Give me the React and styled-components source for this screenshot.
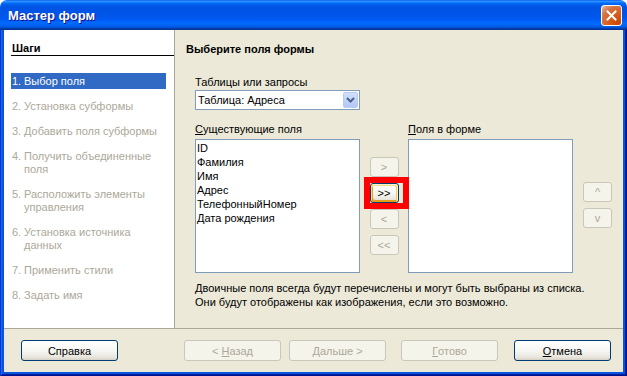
import React from 'react'
import styled, { createGlobalStyle, css } from 'styled-components'

const GlobalStyle = createGlobalStyle`
  html, body {
    margin: 0;
    padding: 0;
    background: #fff;
  }
  body {
    font-family: "Liberation Sans", Arial, sans-serif;
    font-size: 11px;
    color: #000;
  }
`

const Window = styled.div`
  width: 627px;
  height: 376px;
  display: flex;
  flex-direction: column;
  overflow: hidden;
`

const TitleBar = styled.div`
  height: 30px;
  flex: none;
  box-sizing: border-box;
  display: flex;
  align-items: center;
  justify-content: space-between;
  padding: 0 5px 0 8px;
  border-radius: 7px 7px 0 0;
  background: linear-gradient(180deg, #0058ee 0%, #3593ff 4%, #288eff 6%, #127dff 8%, #036ffc 10%, #0262ee 14%, #0057e5 20%, #0054e3 24%, #0055eb 56%, #005bf5 66%, #026afe 76%, #0062ef 86%, #0052d6 92%, #0040ab 94%, #003092 100%);
`

const Title = styled.span`
  color: #fff;
  font: bold 13px "Liberation Sans", Arial, sans-serif;
  text-shadow: 1px 1px #0f1089;
  margin-top: 1px;
`

const CloseButton = styled.div`
  width: 21px;
  height: 21px;
  box-sizing: border-box;
  border: 1px solid #fff;
  border-radius: 3px;
  background: radial-gradient(circle at 90% 90%, #cc4600 0%, #dc6527 55%, #cd7546 70%, #e5a07e 90%, #f6c6ac 100%);
  display: flex;
  align-items: center;
  justify-content: center;
`

const Frame = styled.div`
  flex: 1;
  min-height: 0;
  display: flex;
  flex-direction: column;
  padding: 0 4px 4px;
  background: #0855dd;
  box-shadow: inset 1px 0 #0831d9, inset -1px 0 #00138c, inset 0 -1px #00138c, inset 2px 0 #166aee, inset -2px 0 #001ea0, inset 0 -2px #001ea0;
`

const Main = styled.div`
  height: 298px;
  flex: none;
  display: flex;
`

const Sidebar = styled.div`
  width: 171px;
  flex: none;
  box-sizing: border-box;
  background: #fff;
  border-right: 1px solid #aca899;
`

const StepsHeader = styled.div`
  margin: 12px 0 0 7px;
  padding-left: 1px;
  line-height: 13px;
  font-weight: bold;
  border-bottom: 1px solid #000;
`

const StepList = styled.div`
  margin-top: 17px;
  padding: 0 8px 0 7px;
`

const Step = styled.div`
  display: flex;
  white-space: nowrap;
  line-height: 13px;
  padding: 2px 0 1px 1px;
  margin-bottom: 9px;
  color: ${p => (p.$active ? '#fff' : '#aca899')};
  background: ${p => (p.$active ? '#316ac5' : 'transparent')};
`

const StepNum = styled.span`
  width: 12px;
  flex: none;
`

const Content = styled.div`
  flex: 1;
  background: #ece9d8;
  padding: 13px 0 0 11px;
`

const Heading = styled.div`
  font-weight: bold;
  line-height: 13px;
`

const Form = styled.div`
  margin: 20px 0 0 9px;
`

const Label = styled.div`
  line-height: 13px;
`

const Combo = styled.div`
  width: 165px;
  height: 20px;
  margin-top: 1px;
  box-sizing: border-box;
  border: 1px solid #7f9db9;
  background: #fff;
  display: flex;
  align-items: center;
  justify-content: space-between;
  padding: 0 1px 0 2px;
`

const ComboArrow = styled.div`
  width: 15px;
  height: 16px;
  box-sizing: border-box;
  border: 1px solid #b9cbf3;
  border-radius: 2px;
  background: linear-gradient(180deg, #d2e0fd 0%, #c1d3fb 50%, #b4c8f6 100%);
  display: flex;
  align-items: center;
  justify-content: center;
`

const ListsGrid = styled.div`
  margin-top: 13px;
  display: grid;
  grid-template-columns: 165px 48px 165px 39px;
  grid-template-rows: 13px 134px;
  row-gap: 3px;
`

const ListBox = styled.div`
  grid-row: 2;
  grid-column: ${p => p.$col};
  box-sizing: border-box;
  border: 1px solid #7f9db9;
  background: #fff;
  padding: 1px 0 0 1px;
`

const ListItem = styled.div`
  line-height: 14px;
`

const ButtonColumn = styled.div`
  grid-row: 2;
  grid-column: ${p => p.$col};
  display: flex;
  flex-direction: column;
  align-items: ${p => (p.$center ? 'center' : 'flex-start')};
  padding: ${p => p.$top}px 0 0 ${p => (p.$center ? 0 : 10)}px;
  gap: 6px;
`

const buttonBase = css`
  box-sizing: border-box;
  border-radius: 3px;
  display: flex;
  align-items: center;
  justify-content: center;
  font-size: 11px;
  border: 1px solid ${p => (p.$disabled ? '#c9c7ba' : '#003c74')};
  color: ${p => (p.$disabled ? '#aca899' : '#000')};
  background: ${p =>
    p.$disabled ? '#f5f4ea' : 'linear-gradient(180deg, #ffffff 0%, #f5f5f1 55%, #e8e6dd 85%, #d6d0c5 100%)'};
  ${p =>
    p.$hot &&
    css`
      box-shadow: inset -1px 1px #fff0cf, inset 1px 2px #fdd889, inset -2px 2px #fbc761, inset 2px -2px #e5a01a;
    `}
`

const MoveButton = styled.div`
  ${buttonBase};
  width: 29px;
  height: 20px;
`

const HotWrap = styled.div`
  position: relative;
`

const Annotation = styled.span`
  position: absolute;
  left: -6px;
  top: -6px;
  width: 45px;
  height: 32px;
  box-sizing: border-box;
  border: 6px solid #ff0000;
`

const Description = styled.div`
  margin-top: 8px;
  line-height: 14px;
`

const Footer = styled.div`
  flex: 1;
  display: flex;
  align-items: flex-start;
  padding: 11px 12px 0 17px;
  background: #ece9d8;
  border-top: 1px solid #aca899;
`

const DialogButton = styled.div`
  ${buttonBase};
  width: 97px;
  height: 21px;
  margin-left: ${p => p.$gap || 0}px;
`

const Spacer = styled.div`
  flex: 1;
`

const steps = [
  { n: '1.', lines: ['Выбор поля'], active: true },
  { n: '2.', lines: ['Установка субформы'] },
  { n: '3.', lines: ['Добавить поля субформы'] },
  { n: '4.', lines: ['Получить объединенные', 'поля'] },
  { n: '5.', lines: ['Расположить элементы', 'управления'] },
  { n: '6.', lines: ['Установка источника', 'данных'] },
  { n: '7.', lines: ['Применить стили'] },
  { n: '8.', lines: ['Задать имя'] },
]

const fields = ['ID', 'Фамилия', 'Имя', 'Адрес', 'ТелефонныйНомер', 'Дата рождения']

export default function App() {
  return (
    <>
      <GlobalStyle />
      <Window>
        <TitleBar>
          <Title>Мастер форм</Title>
          <CloseButton>
            <svg width="11" height="11" viewBox="0 0 11 11">
              <path d="M1.5 1.5 L9.5 9.5 M9.5 1.5 L1.5 9.5" stroke="#fff" strokeWidth="2" strokeLinecap="square" />
            </svg>
          </CloseButton>
        </TitleBar>
        <Frame>
          <Main>
            <Sidebar>
              <StepsHeader>Шаги</StepsHeader>
              <StepList>
                {steps.map(s => (
                  <Step key={s.n} $active={s.active}>
                    <StepNum>{s.n}</StepNum>
                    <span>
                      {s.lines.map((l, i) => (
                        <div key={i}>{l}</div>
                      ))}
                    </span>
                  </Step>
                ))}
              </StepList>
            </Sidebar>
            <Content>
              <Heading>Выберите поля формы</Heading>
              <Form>
                <Label>Таблицы или запросы</Label>
                <Combo>
                  <span>Таблица: Адреса</span>
                  <ComboArrow>
                    <svg width="9" height="6" viewBox="0 0 9 6">
                      <path d="M1 1 L4.5 4.5 L8 1" fill="none" stroke="#4d6185" strokeWidth="2" />
                    </svg>
                  </ComboArrow>
                </Combo>
                <ListsGrid>
                  <Label>
                    <u>С</u>уществующие поля
                  </Label>
                  <Label style={{ gridColumn: 3 }}>
                    <u>П</u>оля в форме
                  </Label>
                  <ListBox $col={1}>
                    {fields.map(f => (
                      <ListItem key={f}>{f}</ListItem>
                    ))}
                  </ListBox>
                  <ButtonColumn $col={2} $top={18} $center>
                    <MoveButton $disabled>&gt;</MoveButton>
                    <HotWrap>
                      <MoveButton $hot>&gt;&gt;</MoveButton>
                      <Annotation />
                    </HotWrap>
                    <MoveButton $disabled>&lt;</MoveButton>
                    <MoveButton $disabled>&lt;&lt;</MoveButton>
                  </ButtonColumn>
                  <ListBox $col={3} />
                  <ButtonColumn $col={4} $top={43}>
                    <MoveButton $disabled>^</MoveButton>
                    <MoveButton $disabled>v</MoveButton>
                  </ButtonColumn>
                </ListsGrid>
                <Description>
                  Двоичные поля всегда будут перечислены и могут быть выбраны из списка.
                  <br />
                  Они будут отображены как изображения, если это возможно.
                </Description>
              </Form>
            </Content>
          </Main>
          <Footer>
            <DialogButton>Справка</DialogButton>
            <Spacer />
            <DialogButton $disabled>
              &lt;&nbsp;<u>Н</u>азад
            </DialogButton>
            <DialogButton $disabled $gap={8}>
              <u>Д</u>альше&nbsp;&gt;
            </DialogButton>
            <DialogButton $disabled $gap={15}>
              <u>Г</u>отово
            </DialogButton>
            <DialogButton $gap={16}>
              <u>О</u>тмена
            </DialogButton>
          </Footer>
        </Frame>
      </Window>
    </>
  )
}
